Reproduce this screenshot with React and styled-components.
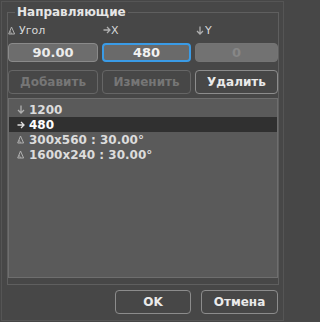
import React from "react";
import styled, { createGlobalStyle, css } from "styled-components";

const Global = createGlobalStyle`
  html, body { margin: 0; padding: 0; background: #474747; }
  * { box-sizing: border-box; }
`;

const Window = styled.div`
  width: 285px;
  height: 322px;
  padding: 1px;
  background: #474747;
  font-family: "DejaVu Sans", Verdana, sans-serif;
`;

const Frame = styled.div`
  height: 100%;
  border: 1px solid #555555;
  display: flex;
  flex-direction: column;
  padding: 3px 4px 0 5px;
`;

const Group = styled.fieldset`
  margin: 0;
  width: 272px;
  height: 280px;
  border: 1px solid #5f5f5f;
  padding: 0;
  min-width: 0;
`;

const Legend = styled.legend`
  margin-left: 7px;
  padding: 0 2px;
  font-size: 12px;
  line-height: 14px;
  font-weight: bold;
  color: #e6e6e6;
`;

const Row = styled.div`
  display: grid;
  grid-template-columns: 90px 89px 83px;
  column-gap: 4px;
  margin-top: ${(p) => p.$top || 0}px;
`;

const Label = styled.div`
  height: 18px;
  display: flex;
  align-items: center;
  padding-top: 2px;
  font-size: 11px;
  color: #d8d8d8;
`;

const LabelIcon = styled.span`
  display: inline-flex;
  align-items: center;
  width: ${(p) => p.$w}px;
  padding-left: ${(p) => p.$pl || 0}px;
`;

const Field = styled.div`
  height: 19px;
  border-radius: 4px;
  display: flex;
  align-items: center;
  justify-content: center;
  font-size: 13px;
  font-weight: bold;
  ${(p) =>
    p.$state === "focus"
      ? css`
          border: 2px solid #3a9be6;
          background: #6a6a6a;
          color: #f2f2f2;
        `
      : p.$state === "disabled"
      ? css`
          border: 1px solid #747474;
          background: #727272;
          color: #878787;
        `
      : css`
          border: 1px solid #8a8a8a;
          background: #6d6d6d;
          color: #ececec;
        `}
`;

const Button = styled.button`
  height: 24px;
  padding: 0;
  border-radius: 4px;
  background: transparent;
  font-family: inherit;
  font-size: 12px;
  font-weight: bold;
  border: 1px solid ${(p) => (p.disabled ? "#666666" : "#8c8c8c")};
  color: ${(p) => (p.disabled ? "#767676" : "#eaeaea")};
  width: ${(p) => (p.$w ? `${p.$w}px` : "auto")};
`;

const List = styled.div`
  margin-top: 4px;
  height: 180px;
  width: 270px;
  border: 1px solid #6e6e6e;
  background: #5a5a5a;
  padding: 3px 0 0 0;
`;

const Item = styled.div`
  height: 15px;
  display: flex;
  align-items: center;
  padding-left: 4px;
  font-size: 12px;
  font-weight: bold;
  background: ${(p) => (p.$sel ? "#303030" : "transparent")};
  color: ${(p) => (p.$sel ? "#ffffff" : "#dcdcdc")};
`;

const IconBox = styled.span`
  width: 15px;
  display: inline-flex;
  align-items: center;
  justify-content: center;
  margin-right: 1px;
`;

const Footer = styled.div`
  display: flex;
  justify-content: flex-end;
  gap: 10px;
  margin-top: 5px;
  padding-right: 1px;
`;

const Angle = ({ c = "#b0b0b0" }) => (
  <svg width="7" height="9" viewBox="0 0 7 9">
    <path d="M3.5 1 L0.7 8 H6.6 L3.5 1" fill="none" stroke={c} strokeWidth="1" />
    <path d="M2 5.4 Q3.3 5.8 3.3 8" fill="none" stroke={c} strokeWidth="0.9" />
  </svg>
);

const Right = ({ c = "#b0b0b0" }) => (
  <svg width="8" height="8" viewBox="0 0 8 8">
    <path d="M0.5 4 H7 M4 1 L7 4 L4 7" fill="none" stroke={c} strokeWidth="1.3" />
  </svg>
);

const Down = ({ c = "#b0b0b0" }) => (
  <svg width="8" height="9" viewBox="0 0 8 9">
    <path d="M4 0.5 V8 M1 5 L4 8 L7 5" fill="none" stroke={c} strokeWidth="1.3" />
  </svg>
);

const items = [
  { icon: <Down />, text: "1200" },
  { icon: <Right c="#e0e0e0" />, text: "480", sel: true },
  { icon: <Angle />, text: "300x560 : 30.00°" },
  { icon: <Angle />, text: "1600x240 : 30.00°" },
];

export default function App() {
  return (
    <>
      <Global />
      <Window>
        <Frame>
          <Group>
            <Legend>Направляющие</Legend>
            <Row $top={1}>
              <Label>
                <LabelIcon $w={11}>
                  <Angle />
                </LabelIcon>
                Угол
              </Label>
              <Label>
                <LabelIcon $w={9} $pl={1}>
                  <Right />
                </LabelIcon>
                X
              </Label>
              <Label>
                <LabelIcon $w={10} $pl={1}>
                  <Down />
                </LabelIcon>
                Y
              </Label>
            </Row>
            <Row $top={5}>
              <Field>90.00</Field>
              <Field $state="focus">480</Field>
              <Field $state="disabled">0</Field>
            </Row>
            <Row $top={8}>
              <Button disabled>Добавить</Button>
              <Button disabled>Изменить</Button>
              <Button>Удалить</Button>
            </Row>
            <List>
              {items.map((it) => (
                <Item key={it.text} $sel={it.sel}>
                  <IconBox>{it.icon}</IconBox>
                  {it.text}
                </Item>
              ))}
            </List>
          </Group>
          <Footer>
            <Button $w={76}>OK</Button>
            <Button $w={77}>Отмена</Button>
          </Footer>
        </Frame>
      </Window>
    </>
  );
}
